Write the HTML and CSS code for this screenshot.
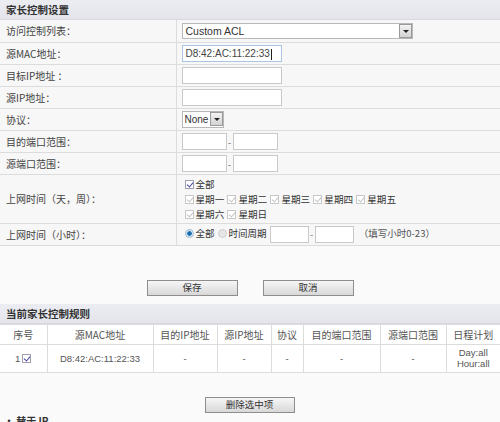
FILE: index.html
```html
<!DOCTYPE html>
<html lang="zh-CN">
<head>
    <meta charset="UTF-8">
    <title>家长控制设置</title>
    <link rel="stylesheet" href="styles.css">
</head>
<body>
    <div class="page">
        <div class="section-title">家长控制设置</div>
        <table class="form-table">
            <tr>
                <td class="label">访问控制列表：</td>
                <td class="field">
                    <div class="select wide"><span>Custom ACL</span><i class="arrow"></i></div>
                </td>
            </tr>
            <tr>
                <td class="label">源MAC地址：</td>
                <td class="field"><div class="input focused">D8:42:AC:11:22:33<b class="caret"></b></div></td>
            </tr>
            <tr>
                <td class="label">目标IP地址 ：</td>
                <td class="field"><div class="input"></div></td>
            </tr>
            <tr>
                <td class="label">源IP地址：</td>
                <td class="field"><div class="input"></div></td>
            </tr>
            <tr>
                <td class="label">协议：</td>
                <td class="field">
                    <div class="select small"><span>None</span><i class="arrow"></i></div>
                </td>
            </tr>
            <tr>
                <td class="label">目的端口范围：</td>
                <td class="field range">
                    <div class="input port"></div><span class="dash">-</span><div class="input port"></div>
                </td>
            </tr>
            <tr>
                <td class="label">源端口范围：</td>
                <td class="field range">
                    <div class="input port"></div><span class="dash">-</span><div class="input port"></div>
                </td>
            </tr>
            <tr class="tall">
                <td class="label">上网时间（天，周）：</td>
                <td class="field days">
                    <div class="day-line"><span class="cb on"></span>全部</div>
                    <div class="day-line">
                        <span class="cb dim"></span>星期一
                        <span class="cb dim"></span>星期二
                        <span class="cb dim"></span>星期三
                        <span class="cb dim"></span>星期四
                        <span class="cb dim"></span>星期五
                    </div>
                    <div class="day-line">
                        <span class="cb dim"></span>星期六
                        <span class="cb dim"></span>星期日
                    </div>
                </td>
            </tr>
            <tr>
                <td class="label">上网时间（小时）：</td>
                <td class="field range hours">
                    <span class="radio on"></span>全部<span class="radio"></span>时间周期
                    <div class="input hour"></div><span class="dash">-</span><div class="input hour"></div>
                    <span class="hint">（填写小时0-23）</span>
                </td>
            </tr>
        </table>

        <div class="buttons">
            <button class="btn">保存</button>
            <button class="btn">取消</button>
        </div>

        <div class="section-title">当前家长控制规则</div>
        <table class="rules">
            <tr>
                <th class="c-no">序号</th>
                <th class="c-mac">源MAC地址</th>
                <th class="c-dip">目的IP地址</th>
                <th class="c-sip">源IP地址</th>
                <th class="c-proto">协议</th>
                <th class="c-dport">目的端口范围</th>
                <th class="c-sport">源端口范围</th>
                <th class="c-plan">日程计划</th>
            </tr>
            <tr>
                <td class="c-no">1<span class="cb on"></span></td>
                <td>D8:42:AC:11:22:33</td>
                <td>-</td>
                <td>-</td>
                <td>-</td>
                <td>-</td>
                <td>-</td>
                <td>Day:all<br>Hour:all</td>
            </tr>
        </table>

        <div class="delete-row">
            <button class="btn delete">删除选中项</button>
        </div>

        <div class="footnote">• 替于 IP</div>
    </div>
</body>
</html>
```

FILE: styles.css
```css
* {
    margin: 0;
    padding: 0;
    box-sizing: border-box;
}

body {
    font-family: "Noto Sans CJK SC", "Liberation Sans", sans-serif;
    font-size: 10px;
    color: #444;
    background: #fafafa;
    width: 500px;
    height: 422px;
    overflow: hidden;
}

.page {
    width: 500px;
}

.section-title {
    height: 20px;
    line-height: 20px;
    padding-left: 6px;
    font-size: 10.5px;
    font-weight: 700;
    color: #333;
    background: linear-gradient(#ecedf2, #e4e5ec);
    border-bottom: 1px solid #d8d8de;
}

/* 设置表单 */
.form-table {
    width: 500px;
    border-collapse: collapse;
}

.form-table td {
    height: 22px;
    border-bottom: 1px solid #dcdcdc;
    background: #f7f7f7;
}

.form-table .label {
    width: 176px;
    padding-left: 6px;
    border-right: 1px solid #dcdcdc;
    color: #444;
    white-space: nowrap;
}

.form-table .field {
    padding-left: 5px;
}

.form-table tr.tall td {
    height: 49px;
}

.range {
    white-space: nowrap;
}

.input {
    display: inline-block;
    vertical-align: middle;
    width: 100px;
    height: 17px;
    line-height: 15px;
    border: 1px solid #c9c9c9;
    background: #fff;
    padding-left: 3px;
    font-family: "Liberation Sans", sans-serif;
    font-size: 10px;
    color: #444;
}

.input.focused {
    border-color: #a9c5e4;
}

.caret {
    display: inline-block;
    width: 1px;
    height: 11px;
    background: #222;
    vertical-align: middle;
    margin-left: 1px;
}

.input.port {
    width: 45px;
}

.input.hour {
    width: 39px;
}

.dash {
    display: inline-block;
    width: 6px;
    text-align: center;
    vertical-align: middle;
    color: #777;
}

.select {
    display: inline-flex;
    align-items: center;
    justify-content: space-between;
    vertical-align: middle;
    height: 16px;
    border: 1px solid #b8b8b8;
    background: #fff;
    padding-left: 3px;
    font-family: "Liberation Sans", sans-serif;
    font-size: 10.5px;
    color: #333;
}

.select.wide {
    width: 231px;
}

.select.small {
    width: 42px;
    height: 17px;
    padding-left: 2px;
    font-size: 10px;
}

.arrow {
    position: relative;
    flex: none;
    width: 13px;
    height: 14px;
    background: linear-gradient(#f2f2f2, #d4d4d4);
    border: 1px solid #9a9a9a;
}

.arrow::after {
    content: "";
    position: absolute;
    left: 3px;
    top: 5px;
    border-left: 3px solid transparent;
    border-right: 3px solid transparent;
    border-top: 3px solid #222;
}

.days {
    padding-top: 2px;
}

.day-line {
    height: 15px;
    line-height: 15px;
    white-space: nowrap;
    color: #333;
    font-size: 9.6px;
    word-spacing: -2px;
}

.cb {
    display: inline-block;
    vertical-align: -1px;
    width: 9px;
    height: 9px;
    border: 1px solid #a0a0b0;
    background: #fff;
    margin: 0 2px 0 3px;
    position: relative;
}

.cb.on::after,
.cb.dim::after {
    content: "";
    position: absolute;
    left: 2px;
    top: 0px;
    width: 3px;
    height: 5px;
    border-right: 1.3px solid #4a4aa8;
    border-bottom: 1.3px solid #4a4aa8;
    transform: rotate(40deg);
}

.cb.dim {
    border-color: #c8c8c8;
}

.cb.dim::after {
    border-color: #c4c4c4;
}

.hours {
    font-size: 9.5px;
    color: #333;
}

.radio {
    display: inline-block;
    vertical-align: -1px;
    width: 9px;
    height: 9px;
    border-radius: 50%;
    background: #e6e6e6;
    border: 1px solid #cfcfcf;
    margin: 0 2px 0 3px;
}

.radio.on {
    background: radial-gradient(circle, #1a6fb0 0 2px, #d9e8f4 2.5px);
    border-color: #9fb9d2;
}

.hours .input.hour:first-of-type {
    margin-left: 1px;
}

.hint {
    margin-left: 3px;
    color: #555;
}

.buttons {
    height: 58px;
    display: flex;
    justify-content: center;
    align-items: flex-end;
    gap: 25px;
    padding-bottom: 8px;
    background: #fafafa;
}

.btn {
    width: 91px;
    height: 16px;
    border: 1px solid #8e8e8e;
    background: linear-gradient(#f6f6f6, #d8d8d8);
    font-family: "Noto Sans CJK SC", sans-serif;
    font-size: 9.5px;
    color: #333;
    line-height: 13px;
}

/* 规则列表 */
.rules {
    width: 500px;
    border-collapse: collapse;
    background: #fff;
}

.rules th,
.rules td {
    border: 1px solid #dcdcdc;
    text-align: center;
    font-weight: 400;
    color: #555;
}

.rules th {
    height: 20px;
}

.rules td {
    height: 28px;
    font-family: "Liberation Sans", sans-serif;
    font-size: 9.5px;
}

.rules tr th:first-child,
.rules tr td:first-child {
    border-left: none;
}

.rules tr th:last-child,
.rules tr td:last-child {
    border-right: none;
}

.c-no { width: 47px; }
.c-mac { width: 106px; }
.c-dip { width: 64px; }
.c-sip { width: 54px; }
.c-proto { width: 32px; }
.c-dport { width: 77px; }
.c-sport { width: 66px; }

.rules td.c-no .cb {
    margin: 0 0 0 2px;
}

.delete-row {
    display: flex;
    justify-content: center;
    padding-top: 24px;
    padding-right: 1px;
}

.btn.delete {
    width: 90px;
}

.footnote {
    padding-left: 4px;
    padding-top: 2px;
    font-size: 10px;
    line-height: 12px;
    color: #333;
    font-weight: 700;
}
```
